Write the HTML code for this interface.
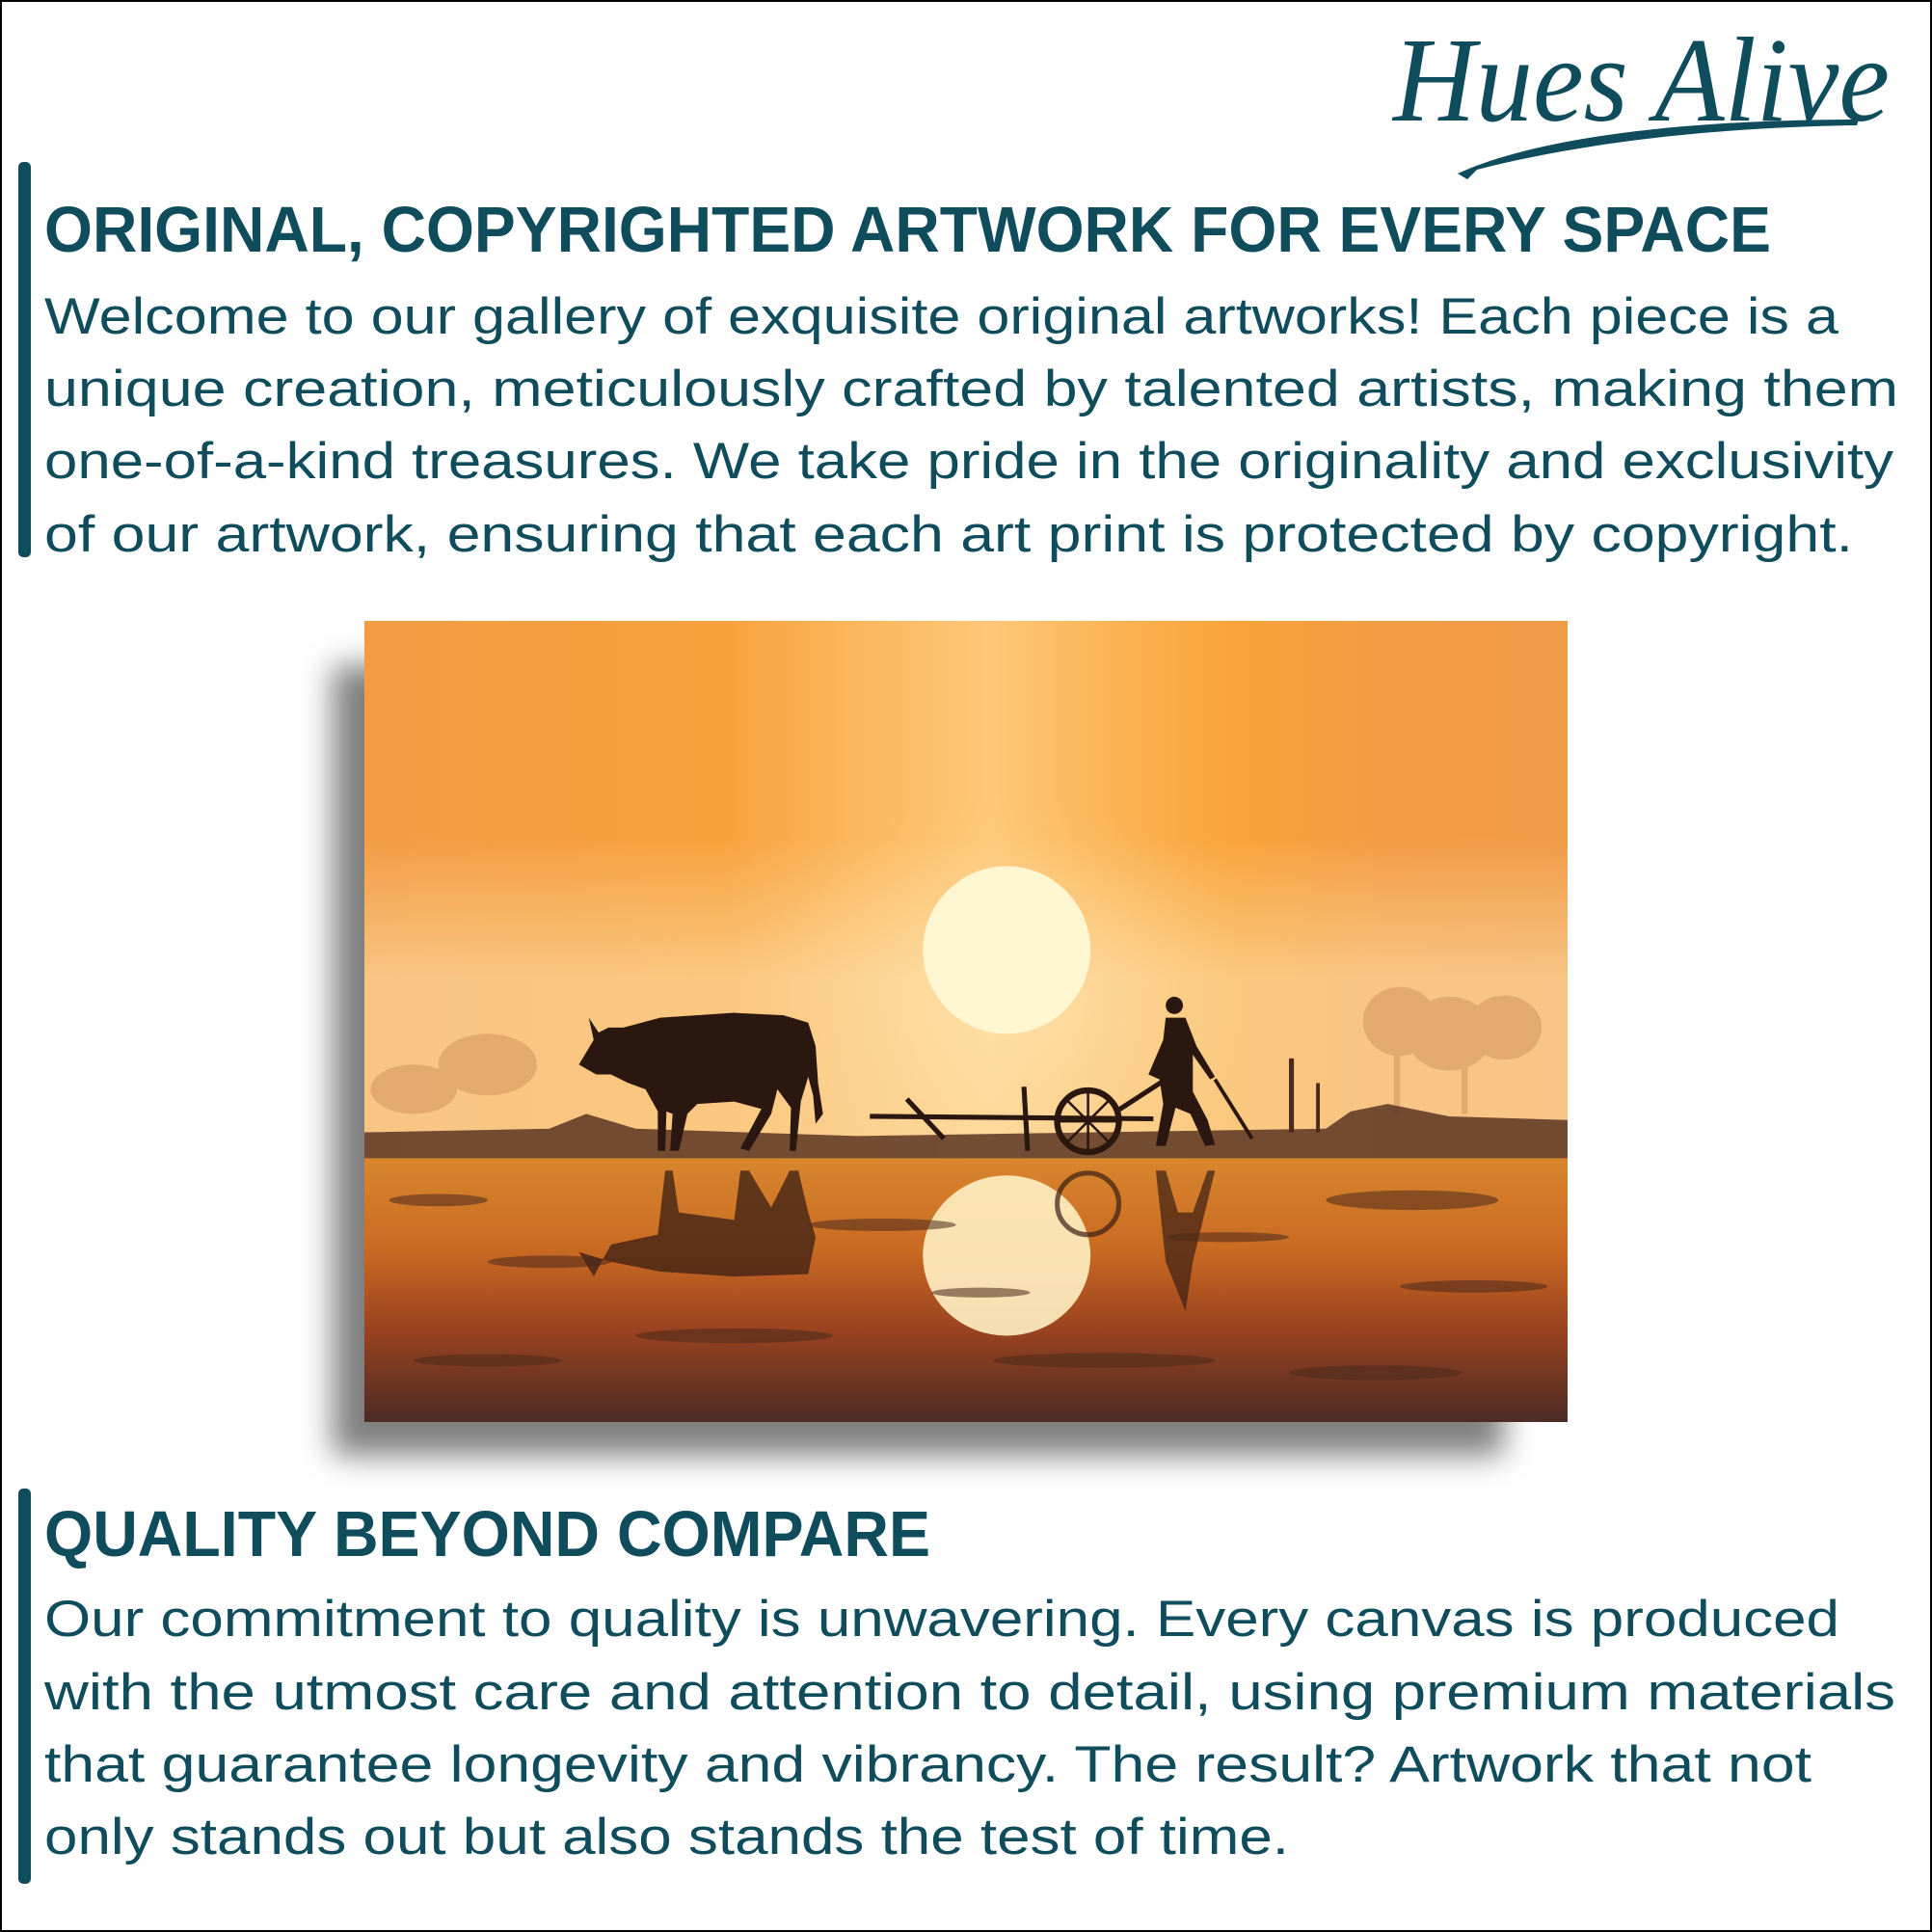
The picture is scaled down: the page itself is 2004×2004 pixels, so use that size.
<!DOCTYPE html>
<html><head><meta charset="utf-8"><style>
html,body{margin:0;padding:0;background:#fff;}
svg{display:block;}
</style></head><body>
<svg width="2004" height="2004" viewBox="0 0 2004 2004" xmlns="http://www.w3.org/2000/svg">
<defs>
<filter id="sh" x="-20%" y="-20%" width="140%" height="140%"><feGaussianBlur stdDeviation="16"/></filter>
<linearGradient id="skyH" x1="0" y1="0" x2="1" y2="0">
<stop offset="0" stop-color="#f29c44"/><stop offset="0.3" stop-color="#f7a23c"/><stop offset="0.4" stop-color="#fbb55a"/><stop offset="0.52" stop-color="#fdc878"/><stop offset="0.62" stop-color="#fbb455"/><stop offset="0.72" stop-color="#f8a43a"/><stop offset="0.85" stop-color="#f29c44"/><stop offset="1" stop-color="#f09c46"/>
</linearGradient>
<linearGradient id="skyV" x1="0" y1="0" x2="0" y2="1">
<stop offset="0" stop-color="#fde6b8" stop-opacity="0"/><stop offset="0.4" stop-color="#fde6b8" stop-opacity="0"/><stop offset="0.66" stop-color="#fde6b8" stop-opacity="0.55"/>
</linearGradient>
<linearGradient id="water" x1="0" y1="0" x2="0" y2="1">
<stop offset="0" stop-color="#d8862e"/><stop offset="0.35" stop-color="#c96a22"/><stop offset="0.65" stop-color="#9a4320"/><stop offset="1" stop-color="#4c2b24"/>
</linearGradient>
<radialGradient id="glow" cx="0.5" cy="0.5" r="0.5">
<stop offset="0" stop-color="#fff0c0" stop-opacity="0.4"/><stop offset="1" stop-color="#ffd890" stop-opacity="0"/>
</radialGradient>
</defs>
<rect x="1" y="1" width="2002" height="2002" fill="#fff" stroke="#000" stroke-width="2"/>

<!-- logo -->
<g fill="#0f4c5c">
<text x="1445" y="125" font-family="Liberation Serif, serif" font-style="italic" font-size="125" textLength="515" lengthAdjust="spacingAndGlyphs">Hues  Alive</text>
<path d="M1512 180 C1600 140 1760 124 1928 124 L1926 130 C1780 132 1640 148 1532 176 L1522 186 Z"/>
</g>

<!-- section 1 -->
<rect x="19" y="168" width="13" height="410" rx="5" fill="#0f4c5c"/>
<g fill="#0f4c5c" font-family="Liberation Sans, sans-serif">
<text x="46" y="261" font-size="67" font-weight="bold" textLength="1791" lengthAdjust="spacingAndGlyphs">ORIGINAL, COPYRIGHTED ARTWORK FOR EVERY SPACE</text>
<g font-size="53">
<text x="46" y="346" textLength="1861" lengthAdjust="spacingAndGlyphs">Welcome to our gallery of exquisite original artworks! Each piece is a</text>
<text x="46" y="421" textLength="1923" lengthAdjust="spacingAndGlyphs">unique creation, meticulously crafted by talented artists, making them</text>
<text x="46" y="496" textLength="1918" lengthAdjust="spacingAndGlyphs">one-of-a-kind treasures. We take pride in the originality and exclusivity</text>
<text x="46" y="572" textLength="1876" lengthAdjust="spacingAndGlyphs">of our artwork, ensuring that each art print is protected by copyright.</text>
</g>
</g>

<!-- image shadow -->
<rect x="345" y="690" width="1215" height="820" fill="#000" opacity="0.5" filter="url(#sh)"/>

<!-- painting -->
<svg x="378" y="644" width="1248" height="831" viewBox="0 0 976 650" preserveAspectRatio="none">
<rect width="976" height="650" fill="url(#skyH)"/>
<rect width="976" height="440" fill="url(#skyV)"/>
<ellipse cx="521" cy="300" rx="200" ry="160" fill="url(#glow)"/>
<circle cx="521" cy="267" r="68" fill="#fff6d2"/>
<!-- distant trees -->
<g fill="#c88a50" opacity="0.45">
<ellipse cx="840" cy="325" rx="30" ry="28"/><ellipse cx="880" cy="335" rx="35" ry="30"/><ellipse cx="925" cy="330" rx="30" ry="26"/>
<rect x="835" y="330" width="5" height="70"/><rect x="890" y="340" width="5" height="60"/>
<ellipse cx="100" cy="360" rx="40" ry="25"/><ellipse cx="40" cy="380" rx="35" ry="20"/>
</g>
<!-- ground -->
<path d="M0 415 L150 412 L180 400 L220 412 L400 418 L780 412 L800 398 L830 392 L880 402 L976 405 L976 440 L0 445 Z" fill="#5a3522" opacity="0.85"/>
<rect x="0" y="436" width="976" height="214" fill="url(#water)"/>
<!-- sun reflection -->
<ellipse cx="521" cy="515" rx="68" ry="65" fill="#fff0c2" opacity="0.9"/>
<!-- cow -->
<g fill="#2a1710">
<path d="M174 360 L186 340 L182 322 L190 334 L198 330 L210 330 L240 322 L300 318 L340 320 L360 326 L366 345 L368 375 L372 400 L366 408 L364 385 L360 370 L354 390 L350 430 L345 430 L346 395 L335 380 L330 400 L312 430 L305 428 L322 396 L300 390 L270 392 L262 400 L255 430 L248 430 L250 400 L245 398 L244 430 L238 430 L238 398 L228 380 L214 375 L200 368 L188 368 Z"/>
</g>
<!-- cow reflection -->
<path d="M174 512 L186 532 L200 506 L238 498 L244 446 L250 446 L255 480 L300 486 L305 446 L312 446 L330 476 L345 446 L352 446 L360 480 L366 500 L360 530 L300 532 L240 528 L200 520 Z" fill="#3a1f14" opacity="0.75"/>
<!-- plough -->
<g stroke="#2a1710" fill="none" stroke-width="4">
<line x1="410" y1="402" x2="640" y2="404"/>
<line x1="440" y1="388" x2="470" y2="420"/>
<line x1="535" y1="378" x2="538" y2="430"/>
<circle cx="587" cy="406" r="25" stroke-width="5"/>
<line x1="587" y1="381" x2="587" y2="431" stroke-width="2"/><line x1="562" y1="406" x2="612" y2="406" stroke-width="2"/>
<line x1="570" y1="389" x2="604" y2="423" stroke-width="2"/><line x1="604" y1="389" x2="570" y2="423" stroke-width="2"/>
<line x1="610" y1="398" x2="650" y2="372"/>
<line x1="690" y1="372" x2="720" y2="420" stroke-width="3"/>
</g>
<circle cx="587" cy="473" r="25" stroke="#3a1f14" stroke-width="4" fill="none" opacity="0.7"/>
<!-- man -->
<g fill="#2a1710">
<circle cx="657" cy="312" r="7"/>
<path d="M650 322 L666 322 L675 345 L690 370 L686 372 L672 352 L672 382 L684 405 L690 425 L682 426 L670 400 L658 395 L650 426 L642 426 L648 392 L645 372 L636 368 L648 340 Z"/>
</g>
<path d="M642 446 L650 446 L660 480 L672 480 L684 446 L690 446 L672 520 L666 560 L650 520 Z" fill="#3a1f14" opacity="0.7"/>
<!-- posts -->
<g fill="#4a2a1a"><rect x="750" y="355" width="4" height="60"/><rect x="772" y="375" width="3" height="40"/></g>
<!-- water patches -->
<g fill="#4b2a1c" opacity="0.55">
<ellipse cx="60" cy="470" rx="40" ry="5"/><ellipse cx="150" cy="520" rx="50" ry="5"/><ellipse cx="420" cy="490" rx="60" ry="5"/><ellipse cx="700" cy="500" rx="50" ry="4"/><ellipse cx="850" cy="470" rx="70" ry="8"/><ellipse cx="900" cy="540" rx="60" ry="5"/><ellipse cx="300" cy="580" rx="80" ry="6"/><ellipse cx="600" cy="600" rx="90" ry="6"/><ellipse cx="820" cy="610" rx="70" ry="6"/><ellipse cx="100" cy="600" rx="60" ry="5"/><ellipse cx="500" cy="545" rx="40" ry="4"/>
</g>
</svg>

<!-- section 2 -->
<rect x="19" y="1544" width="13" height="410" rx="5" fill="#0f4c5c"/>
<g fill="#0f4c5c" font-family="Liberation Sans, sans-serif">
<text x="46" y="1614" font-size="67" font-weight="bold" textLength="919" lengthAdjust="spacingAndGlyphs">QUALITY BEYOND COMPARE</text>
<g font-size="53">
<text x="46" y="1697" textLength="1862" lengthAdjust="spacingAndGlyphs">Our commitment to quality is unwavering. Every canvas is produced</text>
<text x="46" y="1773" textLength="1920" lengthAdjust="spacingAndGlyphs">with the utmost care and attention to detail, using premium materials</text>
<text x="46" y="1848" textLength="1833" lengthAdjust="spacingAndGlyphs">that guarantee longevity and vibrancy. The result? Artwork that not</text>
<text x="46" y="1923" textLength="1291" lengthAdjust="spacingAndGlyphs">only stands out but also stands the test of time.</text>
</g>
</g>
</svg>
</body></html>
